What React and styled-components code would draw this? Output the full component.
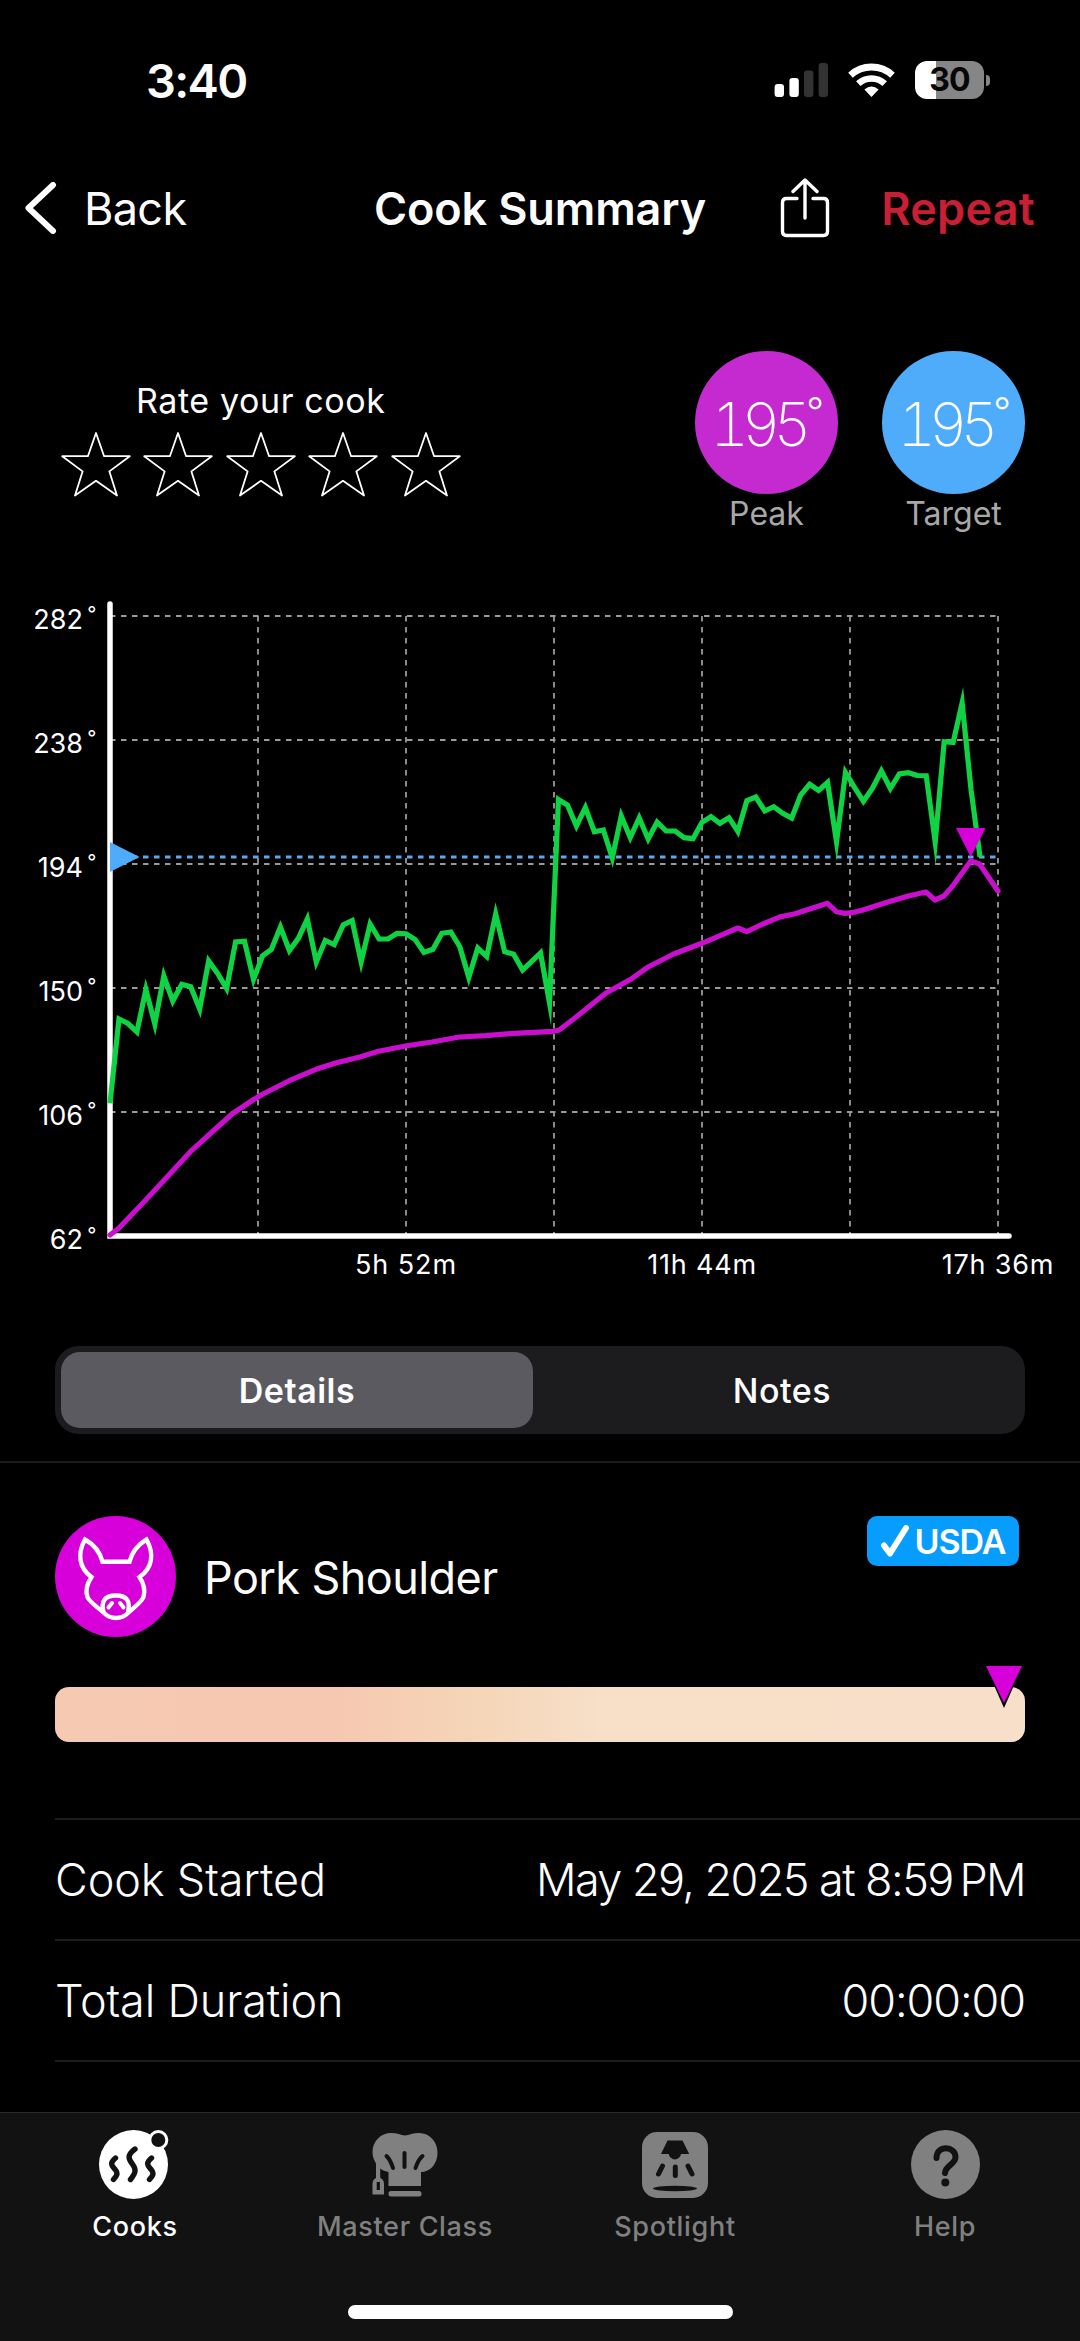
import React from 'react'
import styled, { createGlobalStyle } from 'styled-components';


const GlobalStyle = createGlobalStyle`
    html, body {
        margin: 0;
        background: #000;
    }

    * {
        box-sizing: border-box;
    }
`

const Screen = styled.div`
    width: 1080px;
    height: 2341px;
    display: flex;
    flex-direction: column;
    overflow: hidden;
    background: #000;
    color: #fdfdfd;
    font-family: Inter, 'Noto Sans', sans-serif;
    font-size: 45px;
`

const StatusBar = styled.div`
    height: 160px;
    display: flex;
    align-items: center;
    justify-content: space-between;
    padding: 0 90px 0 146px;
`

const Clock = styled.div`
    font-size: 47px;
    font-weight: 600;
    letter-spacing: -0.035em;
`

const StatusIcons = styled.div`
    display: flex;
    align-items: center;
    gap: 20px;
`

const Battery = styled.div`
    display: flex;
    align-items: center;
    gap: 2px;
`

const BatteryBody = styled.div`
    width: 69px;
    height: 38px;
    border-radius: 12px;
    background: linear-gradient(to right, #fff 31%, #868686 31%);
    color: #060606;
    font-size: 32px;
    line-height: 38px;
    font-weight: 700;
    letter-spacing: -0.03em;
    text-align: center;
`

const BatteryTip = styled.div`
    width: 4px;
    height: 11px;
    border-radius: 0 5px 5px 0;
    background: #868686;
`

const NavBar = styled.header`
    height: 96px;
    display: grid;
    grid-template-columns: 1fr auto 1fr;
    align-items: center;
    padding: 0 45px 0 25px;
`

const BackButton = styled.div`
    display: flex;
    align-items: center;
    gap: 25px;
    letter-spacing: -0.015em;
`

const NavTitle = styled.h1`
    margin: 0 0 0 20px;
    font-size: 45px;
    font-weight: 600;
    letter-spacing: -0.003em;
`

const NavActions = styled.div`
    display: flex;
    align-items: center;
    justify-content: flex-end;
    gap: 51px;
`

const RepeatButton = styled.div`
    color: #c91f34;
    font-weight: 600;
    letter-spacing: 0.006em;
`

const Summary = styled.section`
    height: 334px;
    display: flex;
    justify-content: space-between;
    padding: 95px 55px 0 61px;
`

const Rating = styled.div`
    display: flex;
    flex-direction: column;
    align-items: center;
    gap: 10px;
    padding-top: 30px;
`

const RatingLabel = styled.div`
    font-size: 34px;
    line-height: 40px;
    letter-spacing: 0.018em;
`

const Stars = styled.div`
    display: flex;
    gap: 12.4px;
`

const Readings = styled.div`
    display: flex;
    gap: 44px;
`

const Reading = styled.div`
    width: 143px;
    text-align: center;
`

const ReadingCircle = styled.div`
    height: 143px;
    border-radius: 50%;
    padding-right: 6px;
    background: ${props => props.color};
    color: #fff;
    font-size: 60px;
    line-height: 147px;
    font-weight: 200;
    font-variant-numeric: tabular-nums;
    letter-spacing: -0.125em;
`

const Degree = styled.span`
    margin-left: 2px;
    font-size: 39px;
    line-height: 0;
    font-weight: 300;
    vertical-align: 20px;
`

const ReadingLabel = styled.div`
    margin-top: 2px;
    color: #a8a8a8;
    font-size: 32px;
    line-height: 36px;
`

const ChartSvg = styled.svg`
    display: block;
    flex: none;
`

const AxisText = styled.text`
    fill: #fff;
    font-size: ${props => props.$small ? '20px' : '27px'};
    letter-spacing: ${props => props.$spacing || '0'};
    text-anchor: ${props => props.$anchor || 'middle'};
`

const Segments = styled.div`
    flex: none;
    height: 88px;
    margin: 56px 55px 27px;
    display: flex;
    border-radius: 24px;
    background: #1c1c1f;
`

const Segment = styled.div`
    flex: 1;
    margin: 6px 7px 6px 6px;
    border-radius: 19px;
    background: ${props => props.$active ? '#5b5a60' : 'transparent'};
    font-size: 34px;
    line-height: 77px;
    font-weight: ${props => props.$active ? 600 : 500};
    letter-spacing: 0.015em;
    text-align: center;
`

const Details = styled.section`
    border-top: 2px solid #1d1d1d;
    padding: 53px 0 0 55px;
`

const CutHeader = styled.div`
    display: flex;
    align-items: flex-start;
    padding-right: 61px;
`

const CutName = styled.div`
    flex: 1;
    margin-left: 28px;
    padding-top: 2px;
    line-height: 119px;
    letter-spacing: -0.013em;
`

const UsdaBadge = styled.div`
    width: 152px;
    height: 50px;
    display: flex;
    align-items: center;
    justify-content: center;
    gap: 6px;
    border-radius: 10px;
    background: #079dff;
    font-size: 34px;
    font-weight: 600;
    letter-spacing: -0.03em;
`

const Doneness = styled.div`
    position: relative;
    height: 55px;
    margin: 50px 55px 76px 0;
    border-radius: 14px;
    background: linear-gradient(to right, #f6c9b2 0%, #f6c8b1 29%, #f5d5b7 43%, #f7dfc8 56%, #f7dfc9 100%);
`

const DonenessMarker = styled.svg`
    position: absolute;
    top: -22px;
    right: 2px;
`

const InfoRow = styled.div`
    height: 121px;
    display: flex;
    align-items: center;
    justify-content: space-between;
    border-top: 2px solid #1d1d1d;
    padding-right: 55px;
    font-weight: 300;
    letter-spacing: -0.003em;
`

const InfoValue = styled.span`
    letter-spacing: ${props => props.$tight ? '-0.035em' : '-0.024em'};
`

const RowEnd = styled.div`
    border-top: 2px solid #1d1d1d;
`

const TabBar = styled.nav`
    height: 229px;
    flex: none;
    margin-top: auto;
    display: flex;
    flex-direction: column;
    justify-content: space-between;
    align-items: center;
    border-top: 1px solid #2a2a2a;
    background: #121212;
    padding: 17px 0 22px;
`

const Tabs = styled.div`
    display: grid;
    grid-template-columns: repeat(4, 1fr);
    width: 100%;
`

const Tab = styled.div`
    display: flex;
    flex-direction: column;
    align-items: center;
    gap: 13px;
    color: ${props => props.$active ? '#fff' : '#808080'};
    font-size: 27px;
    line-height: 30px;
    font-weight: 500;
    letter-spacing: 0.025em;
`

const HomeIndicator = styled.div`
    width: 385px;
    height: 14px;
    border-radius: 7px;
    background: #fff;
`

// Chart geometry, in svg units. One sample every STEP.
const LEFT = 110;
const RIGHT = 998;
const BOTTOM = 646;
const STEP = (RIGHT - LEFT) / 99;
const GRID_Y = [26, 150, 274, 398, 522];
const GRID_X = [258, 406, 554, 702, 850, 998];
const DEGREES = [282, 238, 194, 150, 106, 62];

const grillTemps = [
    513.3, 429, 433.5, 442, 399.5, 434, 386, 411, 394.3, 396.7,
    419, 371, 383.5, 398.5, 352, 351.3, 389.5, 366, 359.3, 337,
    360.5, 348.3, 329, 372, 350.5, 354.5, 335, 330.5, 372, 334,
    349, 349, 343.3, 343.7, 349.3, 362.5, 359.3, 343.3, 342, 356.7,
    387.5, 358, 366.5, 324, 361.7, 364.3, 380, 371.7, 363, 413,
    209.5, 215, 236, 217.5, 241.7, 240, 268, 226, 247.5, 228,
    249, 232, 241, 241, 247.7, 248.7, 232.3, 226.7, 233.3, 227.7,
    241.5, 210.7, 207, 221, 216.7, 223.3, 228, 205, 194.3, 200.5,
    192.5, 252, 182.5, 197.3, 211.3, 198.3, 181, 198.5, 184, 182.7,
    185.5, 185.7, 252, 151.7, 152.5, 113, 200, 267
];

const meatTemps = [
    [110, 645], [119, 638], [145.7, 610], [163.6, 590.7], [190.4, 561.7], [214.3, 540],
    [232, 524], [253, 510], [262.5, 504.3], [289.3, 490.7], [316, 479.3], [335.7, 473],
    [360.7, 466.7], [378.6, 461.3], [405.4, 456], [432, 452], [459.3, 447], [485.7, 445.7],
    [514.3, 443.3], [553.6, 441.3], [559.3, 440], [573.6, 429], [605.7, 403.3], [630.7, 389.3],
    [648.6, 376.7], [673.6, 364], [702, 353.3], [720, 345.7], [737.9, 338], [746.8, 341.7],
    [762.9, 334], [780.7, 326.7], [795, 323.7], [827.5, 313.3], [836.4, 321.7], [844.3, 323.3],
    [852, 322.7], [862.9, 320], [887.9, 312], [909.3, 305.7], [926, 302], [935, 310],
    [944, 306], [952.9, 295.7], [970.7, 271], [979.6, 274], [998, 301]
];

const Chart = () => (
    <ChartSvg width="1080" height="700" viewBox="0 0 1080 700" fill="none">
        <g stroke="#9a9a9a" strokeWidth="1.8" strokeDasharray="5.5 5.5">
            {GRID_Y.map(y => <path key={y} d={`M${LEFT} ${y}H${RIGHT}`} />)}
            {GRID_X.map(x => <path key={x} d={`M${x} 26V${BOTTOM}`} />)}
        </g>
        <path d="M110 14V646H1009" stroke="#fff" strokeWidth="5.5" strokeLinecap="round" />
        <path d="M110 267H998" stroke="#5aa9ee" strokeWidth="2.8" strokeDasharray="5.5 5.5" />
        <path d="M110 252L139.5 267L110 282Z" fill="#4facfb" />
        <polyline
            points={grillTemps.map((y, i) => `${LEFT + i * STEP},${y}`).join(' ')}
            stroke="#10d343"
            strokeWidth="5.2"
            strokeMiterlimit="20"
        />
        <path d="M956 238H985.5L970.7 267Z" fill="#d800da" />
        <polyline points={meatTemps.join(' ')} stroke="#c90fcd" strokeWidth="5.2" strokeLinejoin="round" strokeLinecap="round" />
        {DEGREES.map((deg, i) => (
            <React.Fragment key={deg}>
                <AxisText x="83" y={38.5 + i * 124.1} $anchor="end">{deg}</AxisText>
                <AxisText x="91.8" y={31 + i * 124.1} $small>°</AxisText>
            </React.Fragment>
        ))}
        <AxisText x="406" y="684" $spacing="0.035em">5h 52m</AxisText>
        <AxisText x="702" y="684" $spacing="0.03em">11h 44m</AxisText>
        <AxisText x="998" y="684" $spacing="0.03em">17h 36m</AxisText>
    </ChartSvg>
)

const SignalIcon = () => (
    <svg width="54" height="34" viewBox="0 0 54 34" fill="#fff">
        <rect x="0.6" y="21" width="9.4" height="13" rx="3" />
        <rect x="15.4" y="15" width="9.4" height="19" rx="3" />
        <rect x="30" y="7.5" width="9.4" height="26.5" rx="3" fill="#333" />
        <rect x="44.6" y="0" width="9.4" height="34" rx="3" fill="#333" />
    </svg>
)

const WifiIcon = () => (
    <svg width="47" height="34" viewBox="0 0 47 34" fill="none">
        <path d="M2.5 12.2A31 31 0 0 1 44.5 12.2" stroke="#fff" strokeWidth="6.8" />
        <path d="M10.3 20.6A19.5 19.5 0 0 1 36.7 20.6" stroke="#fff" strokeWidth="6.6" />
        <path d="M23.5 34L16.4 26.6Q23.5 20.6 30.6 26.6Z" fill="#fff" />
    </svg>
)

const BackIcon = () => (
    <svg width="34" height="52" viewBox="0 0 34 52" fill="none">
        <path d="M28 3L3.5 26L28 49" stroke="#fff" strokeWidth="6" strokeLinecap="round" strokeLinejoin="round" />
    </svg>
)

const ShareIcon = () => (
    <svg width="50" height="60" viewBox="0 0 50 60" fill="none" stroke="#fff" strokeWidth="3.4" strokeLinecap="round" strokeLinejoin="round">
        <path d="M17 20.5H6.5Q2.5 20.5 2.5 24.5V53.5Q2.5 57.5 6.5 57.5H43.5Q47.5 57.5 47.5 53.5V24.5Q47.5 20.5 43.5 20.5H33" />
        <path d="M25 40V2.5M13 13.5L25 2L37 13.5" />
    </svg>
)

const StarIcon = () => (
    <svg width="70" height="66" viewBox="0 0 70 66" fill="none">
        <path
            d="M35 2L43.1 25.2H68.8L48.4 40.4L56 64.5L35 49.8L14 64.5L21.6 40.4L1.2 25.2H26.9Z"
            stroke="#fff"
            strokeWidth="1.8"
            strokeLinejoin="round"
        />
    </svg>
)

const PigIcon = () => (
    <svg width="121" height="121" viewBox="0 0 121 121" fill="none">
        <circle cx="60.5" cy="60.5" r="60.5" fill="#d800da" />
        <g stroke="#fff" strokeWidth="4.4">
            <path d="M47.5 45.8H74.5C77 36 84 28 91.5 23.5C99.5 38 97.5 52 84.5 61C88.5 67 90.5 74 88.5 81C86 87 78 92 73 97Q68 102 61 102Q54 102 49 97C44 92 35 87 32.5 81C30 74 32.5 67 36.5 61C24 52 22 38 30 23.5C38 28 45 36 47.5 45.8Z" />
            <path d="M48.5 96C46 86 49 79.5 60.8 79.5S75.5 86 73 96" />
        </g>
        <path d="M57 87L53.5 91.5M65 87L68.5 91.5" stroke="#fff" strokeWidth="4" strokeLinecap="round" />
    </svg>
)

const CheckIcon = () => (
    <svg width="28" height="32" viewBox="0 0 28 32" fill="none">
        <path d="M3 20.5L9 28.5L25 3" stroke="#fff" strokeWidth="6" strokeLinecap="round" strokeLinejoin="round" />
    </svg>
)

const CooksIcon = () => (
    <svg width="72" height="69" viewBox="0 0 72 69" fill="none">
        <circle cx="34.5" cy="34.5" r="34.5" fill="#fff" />
        <circle cx="59.3" cy="10" r="10" fill="#fff" />
        <circle cx="59.3" cy="10" r="7" fill="#121212" />
        <g stroke="#121212" strokeWidth="5.4" strokeLinecap="round">
            <path d="M16.5 28C9.5 34 13.5 36 16.5 40C19.5 44 17.5 46 14.5 49.5" />
            <path d="M36 19C26.5 26 30.5 30 34 35C37.5 40 36.5 43 31.5 49.5" />
            <path d="M52.5 28C45.5 34 49.5 36 52.5 40C55.5 44 53.5 46 50.5 49.5" />
        </g>
    </svg>
)

const MasterClassIcon = () => (
    <svg width="66" height="69" viewBox="0 0 66 69" fill="none">
        <path d="M19 3C25 3 29 5 33 5.5C37 5 41 3 47 3C58 3 65.5 12 65.5 23C65.5 34 58 42 49 42V56H16.5V42C12 41 10 40 8.2 38.5V48Q12 49.5 12 54V64.5H0.5V54Q0.5 49.5 4 48V33.5C2 30 0.5 27 0.5 22C0.5 11 9 3 19 3Z" fill="#808080" />
        <rect x="16.5" y="61" width="33" height="5.5" rx="2.5" fill="#808080" />
        <rect x="4.7" y="52" width="3.2" height="8" fill="#121212" />
        <path d="M14.5 26Q18.5 30 21 38M32.5 23V37M50.5 26Q46 30 43.5 38" stroke="#121212" strokeWidth="4" strokeLinecap="round" />
    </svg>
)

const SpotlightIcon = () => (
    <svg width="66" height="69" viewBox="0 0 66 69" fill="none">
        <rect x="0" y="2" width="66" height="66" rx="15" fill="#808080" />
        <path d="M25.5 10.5H40.5L47.2 24H39A6.2 6.2 0 0 1 26.7 24H19Z" fill="#121212" />
        <path d="M20.5 36L16.5 44M33.3 37V45.5M46 36L50 44" stroke="#121212" strokeWidth="5" strokeLinecap="round" />
        <ellipse cx="33" cy="58.5" rx="22" ry="2.8" fill="#121212" />
    </svg>
)

const HelpIcon = () => (
    <svg width="69" height="69" viewBox="0 0 69 69" fill="none">
        <circle cx="34.5" cy="34.5" r="34.5" fill="#808080" />
        <path d="M25.5 28C25.5 14.5 44.5 16 44.5 27C44.5 34.5 34.5 35 34 43" stroke="#121212" strokeWidth="6" strokeLinecap="round" />
        <circle cx="34.3" cy="52.5" r="4" fill="#121212" />
    </svg>
)

const tabs = [
    { label: 'Cooks', Icon: CooksIcon },
    { label: 'Master Class', Icon: MasterClassIcon },
    { label: 'Spotlight', Icon: SpotlightIcon },
    { label: 'Help', Icon: HelpIcon },
];

export default function App() {
    return (
        <Screen>
            <GlobalStyle />
            <StatusBar>
                <Clock>3:40</Clock>
                <StatusIcons>
                    <SignalIcon />
                    <WifiIcon />
                    <Battery>
                        <BatteryBody>30</BatteryBody>
                        <BatteryTip />
                    </Battery>
                </StatusIcons>
            </StatusBar>
            <NavBar>
                <BackButton><BackIcon />Back</BackButton>
                <NavTitle>Cook Summary</NavTitle>
                <NavActions>
                    <ShareIcon />
                    <RepeatButton>Repeat</RepeatButton>
                </NavActions>
            </NavBar>
            <Summary>
                <Rating>
                    <RatingLabel>Rate your cook</RatingLabel>
                    <Stars>
                        {[1, 2, 3, 4, 5].map(n => <StarIcon key={n} />)}
                    </Stars>
                </Rating>
                <Readings>
                    <Reading>
                        <ReadingCircle color="#c42ad0">195<Degree>°</Degree></ReadingCircle>
                        <ReadingLabel>Peak</ReadingLabel>
                    </Reading>
                    <Reading>
                        <ReadingCircle color="#4facfb">195<Degree>°</Degree></ReadingCircle>
                        <ReadingLabel>Target</ReadingLabel>
                    </Reading>
                </Readings>
            </Summary>
            <Chart />
            <Segments>
                <Segment $active>Details</Segment>
                <Segment>Notes</Segment>
            </Segments>
            <Details>
                <CutHeader>
                    <PigIcon />
                    <CutName>Pork Shoulder</CutName>
                    <UsdaBadge><CheckIcon />USDA</UsdaBadge>
                </CutHeader>
                <Doneness>
                    <DonenessMarker width="38" height="44" viewBox="0 0 38 44">
                        <path d="M0 0H38L19 43Z" fill="#000" />
                        <path d="M1 1H37L19 38Z" fill="#d800da" />
                    </DonenessMarker>
                </Doneness>
                <InfoRow><span>Cook Started</span><InfoValue $tight>May 29, 2025 at 8:59{'\u202f'}PM</InfoValue></InfoRow>
                <InfoRow><span>Total Duration</span><InfoValue>00:00:00</InfoValue></InfoRow>
                <RowEnd />
            </Details>
            <TabBar>
                <Tabs>
                    {tabs.map(({ label, Icon }, i) => (
                        <Tab key={label} $active={i === 0}><Icon />{label}</Tab>
                    ))}
                </Tabs>
                <HomeIndicator />
            </TabBar>
        </Screen>
    )
}
